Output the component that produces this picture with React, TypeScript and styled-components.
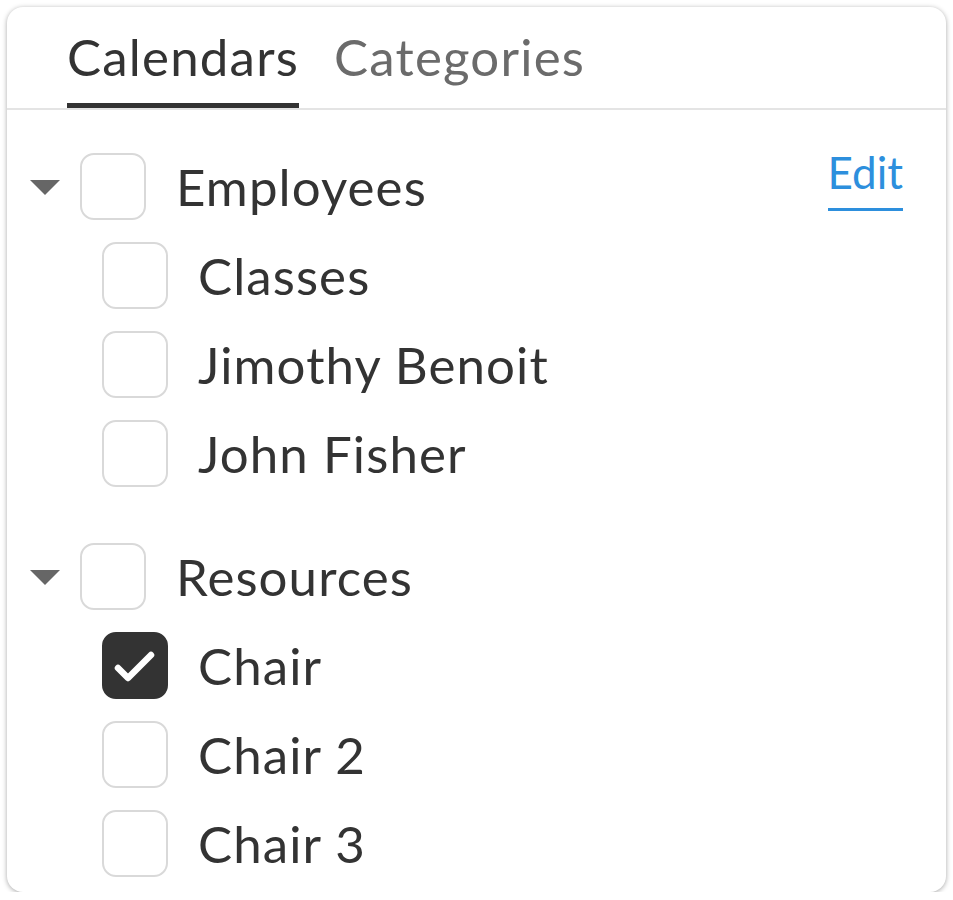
import React from 'react';
import styled, { createGlobalStyle } from 'styled-components';

const GlobalStyle = createGlobalStyle`
  html, body {
    margin: 0;
    padding: 0;
    background: #fff;
  }
  body {
    font-family: Lato, "Open Sans", sans-serif;
    color: #333;
  }
`;

const Card = styled.div`
  margin: 7px 0 0 7px;
  width: 939px;
  height: 885px;
  box-sizing: border-box;
  background: #fff;
  border-radius: 16px;
  box-shadow: 0 1px 5px rgba(0, 0, 0, 0.35);
  overflow: hidden;
`;

const TabBar = styled.div`
  display: flex;
  gap: 35px;
  padding-left: 60px;
  height: 101px;
  border-bottom: 2px solid #e4e4e4;
`;

const Tab = styled.div<{ $active?: boolean }>`
  display: flex;
  align-items: flex-start;
  padding-top: 22px;
  box-sizing: border-box;
  height: 100%;
  font-size: 51px;
  letter-spacing: 1.2px;
  line-height: 56px;
  color: ${p => (p.$active ? '#333' : '#6b6b6b')};
  border-bottom: 5px solid ${p => (p.$active ? '#333' : 'transparent')};
`;

const Body = styled.div`
  padding: 32px 43px 0 23px;
  display: flex;
  flex-direction: column;
  gap: 34px;
`;

const Group = styled.div`
  display: flex;
  flex-direction: column;
`;

const Row = styled.div<{ $child?: boolean }>`
  display: flex;
  align-items: center;
  height: 89px;
  padding-left: ${p => (p.$child ? '72px' : '0')};
`;

const Caret = styled.div`
  width: 0;
  height: 0;
  border-left: 15px solid transparent;
  border-right: 15px solid transparent;
  border-top: 15px solid #666;
  margin-right: 20px;
  margin-top: 2px;
`;

const Box = styled.div<{ $checked?: boolean }>`
  width: 66px;
  height: 67px;
  box-sizing: border-box;
  border-radius: 14px;
  border: 2px solid ${p => (p.$checked ? '#333' : '#d9d9d9')};
  background: ${p => (p.$checked ? '#333' : '#fff')};
  display: flex;
  align-items: center;
  justify-content: center;
  flex-shrink: 0;
`;

const Label = styled.span`
  margin-left: 30px;
  font-size: 51px;
  letter-spacing: 1.1px;
  line-height: 1;
  color: #333;
  flex: 1;
`;

const EditLink = styled.a`
  font-size: 44px;
  line-height: 1;
  color: #2d8fdd;
  text-decoration: none;
  border-bottom: 3px solid #2d8fdd;
  padding-bottom: 14px;
  margin-top: -12px;
`;

const Check = () => (
  <svg width="44" height="38" viewBox="0 0 44 38" fill="none">
    <path d="M5 21 L15 31 L38 8" stroke="#fff" strokeWidth="6.5" strokeLinecap="round" strokeLinejoin="round" />
  </svg>
);

type Item = { name: string; checked?: boolean };
type GroupData = { name: string; edit?: boolean; items: Item[] };

const groups: GroupData[] = [
  {
    name: 'Employees',
    edit: true,
    items: [{ name: 'Classes' }, { name: 'Jimothy Benoit' }, { name: 'John Fisher' }],
  },
  {
    name: 'Resources',
    items: [{ name: 'Chair', checked: true }, { name: 'Chair 2' }, { name: 'Chair 3' }],
  },
];

export default function App() {
  return (
    <>
      <GlobalStyle />
      <Card>
        <TabBar>
          <Tab $active>Calendars</Tab>
          <Tab>Categories</Tab>
        </TabBar>
        <Body>
          {groups.map(g => (
            <Group key={g.name}>
              <Row>
                <Caret />
                <Box />
                <Label>{g.name}</Label>
                {g.edit && <EditLink href="#">Edit</EditLink>}
              </Row>
              {g.items.map(it => (
                <Row $child key={it.name}>
                  <Box $checked={it.checked}>{it.checked && <Check />}</Box>
                  <Label>{it.name}</Label>
                </Row>
              ))}
            </Group>
          ))}
        </Body>
      </Card>
    </>
  );
}
